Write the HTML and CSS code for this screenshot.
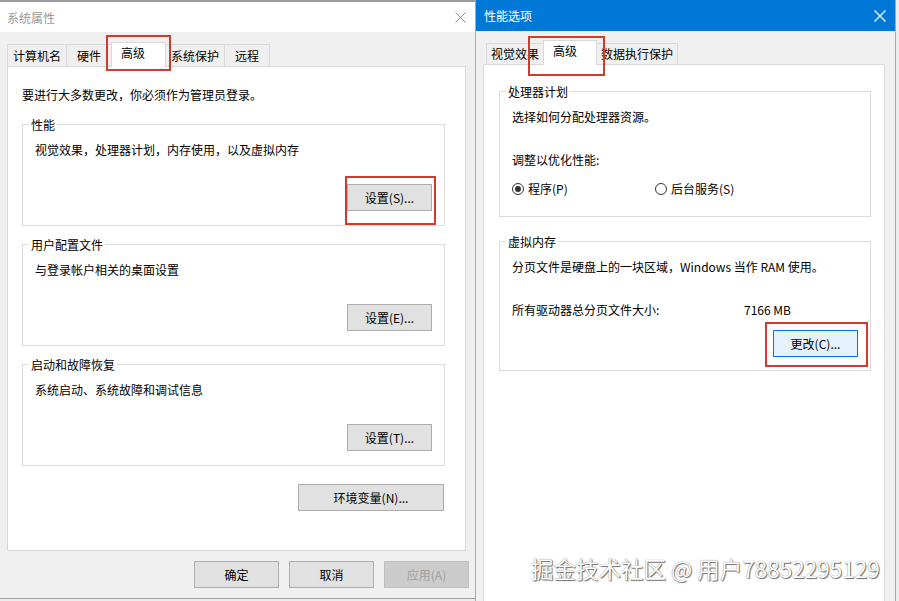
FILE: index.html
```html
<!DOCTYPE html>
<html lang="zh-CN">

<head>
    <meta charset="UTF-8">
    <meta name="viewport" content="width=device-width, initial-scale=1.0">
    <title>系统属性</title>
    <link rel="stylesheet" href="styles.css">
</head>

<body>
    <div class="desktop">
        <!-- 系统属性 -->
        <div class="window sys">
            <div class="titlebar">
                <span class="title">系统属性</span>
                <svg class="close" width="11" height="11" viewBox="0 0 11 11"><path d="M0.5 0.5L10.5 10.5M10.5 0.5L0.5 10.5" stroke="#8a8a8a" stroke-width="1" fill="none"/></svg>
            </div>
            <div class="win-body">
                <div class="tabs">
                    <div class="tab">计算机名</div>
                    <div class="tab">硬件</div>
                    <div class="tab active">高级</div>
                    <div class="tab">系统保护</div>
                    <div class="tab">远程</div>
                </div>
                <div class="panel">
                    <p class="note">要进行大多数更改，你必须作为管理员登录。</p>

                    <fieldset class="group">
                        <legend>性能</legend>
                        <p>视觉效果，处理器计划，内存使用，以及虚拟内存</p>
                        <div class="actions"><button class="btn">设置(S)...</button></div>
                    </fieldset>

                    <fieldset class="group">
                        <legend>用户配置文件</legend>
                        <p>与登录帐户相关的桌面设置</p>
                        <div class="actions"><button class="btn">设置(E)...</button></div>
                    </fieldset>

                    <fieldset class="group">
                        <legend>启动和故障恢复</legend>
                        <p>系统启动、系统故障和调试信息</p>
                        <div class="actions"><button class="btn">设置(T)...</button></div>
                    </fieldset>

                    <div class="actions env"><button class="btn wide">环境变量(N)...</button></div>
                </div>
                <div class="footer">
                    <button class="btn">确定</button>
                    <button class="btn">取消</button>
                    <button class="btn" disabled>应用(A)</button>
                </div>
            </div>
        </div>

        <!-- 性能选项 -->
        <div class="window perf">
            <div class="titlebar">
                <span class="title">性能选项</span>
                <svg class="close" width="12" height="12" viewBox="0 0 12 12"><path d="M0.5 0.5L11.5 11.5M11.5 0.5L0.5 11.5" stroke="#fff" stroke-width="1.2" fill="none"/></svg>
            </div>
            <div class="win-body">
                <div class="tabs">
                    <div class="tab">视觉效果</div>
                    <div class="tab active">高级</div>
                    <div class="tab">数据执行保护</div>
                </div>
                <div class="panel">
                    <fieldset class="group">
                        <legend>处理器计划</legend>
                        <p>选择如何分配处理器资源。</p>
                        <p class="gap">调整以优化性能:</p>
                        <div class="choices">
                            <label class="choice"><span class="radio checked"></span>程序(P)</label>
                            <label class="choice"><span class="radio"></span>后台服务(S)</label>
                        </div>
                    </fieldset>

                    <fieldset class="group">
                        <legend>虚拟内存</legend>
                        <p>分页文件是硬盘上的一块区域，Windows 当作 RAM 使用。</p>
                        <div class="size-row">
                            <span>所有驱动器总分页文件大小:</span>
                            <span>7166 MB</span>
                        </div>
                        <div class="actions near"><button class="btn focus">更改(C)...</button></div>
                    </fieldset>
                </div>
            </div>
        </div>

        <!-- 标注框 -->
        <div class="mark mark-tab-sys"></div>
        <div class="mark mark-perf-btn"></div>
        <div class="mark mark-tab-perf"></div>
        <div class="mark mark-change"></div>

        <div class="watermark">掘金技术社区 @ 用户78852295129</div>
    </div>
</body>

</html>
```

FILE: styles.css
```css
* {
    box-sizing: border-box;
}

body {
    margin: 0;
    font-family: "Noto Sans CJK SC", "Liberation Sans", sans-serif;
    font-size: 12px;
    color: #000;
    background: #ececec;
}

p {
    margin: 0;
    line-height: 17px;
}

.desktop {
    position: relative;
    display: flex;
    height: 601px;
    overflow: hidden;
}

/* windows */
.window {
    display: flex;
    flex-direction: column;
    flex-shrink: 0;
    background: #f0f0f0;
}

.sys {
    width: 475px;
    height: 599px;
    border-top: 2px solid #9d9d9d;
    border-bottom: 1px solid #a3a3a3;
}

.perf {
    width: 421px;
    height: 640px;
    border-left: 1px solid #7fb3e6;
    border-right: 1px solid #7fb3e6;
}

.titlebar {
    display: flex;
    align-items: center;
    justify-content: space-between;
    height: 30px;
    padding: 0 9px 0 7px;
    background: #fff;
}

.title {
    color: #999;
    line-height: 17px;
}

.perf .titlebar {
    height: 31px;
    padding: 0 9px 0 8px;
    background: #0078d7;
}

.perf .title {
    color: #fff;
}

.win-body {
    flex: 1;
    display: flex;
    flex-direction: column;
    padding: 10px 9px 0 7px;
}

.perf .win-body {
    padding: 9px 10px 0 7px;
}

/* tabs */
.tabs {
    display: flex;
    align-items: flex-end;
    height: 24px;
}

.perf .tabs {
    padding-left: 3px;
}

.tab {
    height: 22px;
    min-width: 46px;
    padding: 0 5px;
    border: 1px solid #d9d9d9;
    border-bottom: none;
    line-height: 21px;
    text-align: center;
    background: #f0f0f0;
}

.perf .tab {
    height: 21px;
    padding: 0 4px;
    line-height: 20px;
}

.tab + .tab {
    margin-left: -1px;
}

.tab.active,
.perf .tab.active {
    position: relative;
    z-index: 1;
    height: 25px;
    min-width: 55px;
    margin-bottom: -1px;
    padding: 0 4px 0 9px;
    line-height: 20px;
    text-align: left;
    background: #fff;
}

.perf .tab.active {
    min-width: 54px;
}

.panel {
    background: #fff;
    border: 1px solid #d9d9d9;
    height: 485px;
    padding: 19px 20px 0 14px;
}

.perf .panel {
    flex: 1;
    padding: 18px 13px 0 15px;
}

.note {
    margin-bottom: 13px;
}

/* group boxes */
.group {
    margin: 0;
    padding: 0 12px 14px;
    border: 1px solid #dcdcdc;
}

.group + .group {
    margin-top: 10px;
}

.perf .group {
    padding-bottom: 19px;
}

.perf .group + .group {
    margin-top: 16px;
    padding-bottom: 13px;
}

.group legend {
    margin-left: -6px;
    padding: 0 2px;
    line-height: 17px;
}

.group legend + p {
    margin-top: 8px;
}

.gap {
    margin-top: 26px;
}

.actions {
    display: flex;
    justify-content: flex-end;
    margin-top: 26px;
}

.actions.near {
    margin-top: 12px;
}

.actions.env {
    margin-top: 18px;
    margin-right: 1px;
}

.choices {
    display: grid;
    grid-template-columns: 143px auto;
    margin-top: 12px;
    line-height: 17px;
}

.choice {
    display: flex;
    align-items: center;
    gap: 4px;
}

.radio {
    position: relative;
    width: 12px;
    height: 12px;
    border: 1px solid #333;
    border-radius: 50%;
}

.radio.checked::after {
    content: "";
    position: absolute;
    left: 2px;
    top: 2px;
    width: 6px;
    height: 6px;
    border-radius: 50%;
    background: #333;
}

.size-row {
    display: grid;
    grid-template-columns: 232px auto;
    margin-top: 26px;
    line-height: 17px;
}

/* buttons */
.btn {
    width: 85px;
    height: 27px;
    padding: 0;
    border: 1px solid #adadad;
    background: #e1e1e1;
    font: inherit;
    color: #000;
}

.btn.wide {
    width: 146px;
}

.btn.focus {
    background: #e5f1fb;
    border-color: #0078d7;
}

.btn:disabled {
    background: #cccccc;
    border-color: #bfbfbf;
    color: #a0a0a0;
}

.footer {
    display: flex;
    justify-content: flex-end;
    gap: 10px;
    margin: 10px -3px 0 0;
    padding-bottom: 9px;
}

/* red highlight frames */
.mark {
    position: absolute;
    z-index: 2;
    border: 2px solid #d13b2b;
}

.mark-tab-sys {
    left: 106px;
    top: 35px;
    width: 65px;
    height: 36px;
}

.mark-perf-btn {
    left: 345px;
    top: 176px;
    width: 91px;
    height: 49px;
}

.mark-tab-perf {
    left: 528px;
    top: 36px;
    width: 77px;
    height: 40px;
}

.mark-change {
    left: 765px;
    top: 322px;
    width: 103px;
    height: 45px;
}

.watermark {
    position: absolute;
    z-index: 3;
    left: 531px;
    top: 554px;
    font-size: 22.5px;
    line-height: 28px;
    color: #fff;
    text-shadow: 1px 1px 1px rgba(0, 0, 0, 0.55), 0 0 1px rgba(0, 0, 0, 0.6);
    white-space: nowrap;
}
```
